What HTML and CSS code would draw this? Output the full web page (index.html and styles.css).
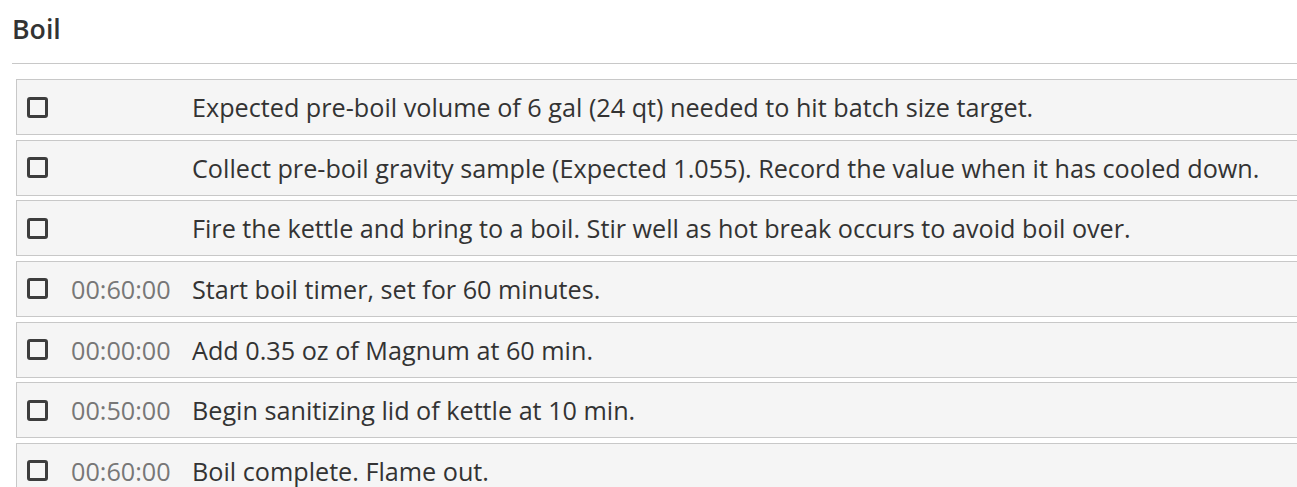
FILE: index.html
```html
<!DOCTYPE html>
<html>
<head>
<meta charset="utf-8">
<link rel="stylesheet" href="styles.css">
</head>
<body>
<div class="page">
  <h2 class="title">Boil</h2>
  <div class="steps">
    <div class="step"><span class="check"></span><span class="time"></span><span class="text">Expected pre-boil volume of 6 gal (24 qt) needed to hit batch size target.</span></div>
    <div class="step"><span class="check"></span><span class="time"></span><span class="text">Collect pre-boil gravity sample (Expected 1.055). Record the value when it has cooled down.</span></div>
    <div class="step"><span class="check"></span><span class="time"></span><span class="text">Fire the kettle and bring to a boil. Stir well as hot break occurs to avoid boil over.</span></div>
    <div class="step"><span class="check"></span><span class="time">00:60:00</span><span class="text">Start boil timer, set for 60 minutes.</span></div>
    <div class="step"><span class="check"></span><span class="time">00:00:00</span><span class="text">Add 0.35 oz of Magnum at 60 min.</span></div>
    <div class="step"><span class="check"></span><span class="time">00:50:00</span><span class="text">Begin sanitizing lid of kettle at 10 min.</span></div>
    <div class="step"><span class="check"></span><span class="time">00:60:00</span><span class="text">Boil complete. Flame out.</span></div>
  </div>
</div>
</body>
</html>
```
FILE: styles.css
```css
html, body {
  margin: 0;
  padding: 0;
  background: #fff;
  overflow: hidden;
}
body {
  font-family: "Open Sans", "Liberation Sans", sans-serif;
  color: #333;
}
.page {
  width: 1400px;
  padding-left: 12px;
}
.title {
  margin: 0;
  padding-top: 10px;
  padding-bottom: 16px;
  height: 37px;
  font-size: 26.7px;
  font-weight: 600;
  line-height: 37px;
  color: #333;
  border-bottom: 1px solid #c8c8c8;
  margin-bottom: 15px;
}
.steps {
  padding-left: 4px;
  display: flex;
  flex-direction: column;
  gap: 4.67px;
}
.step {
  height: 54px;
  border: 1px solid #c8c8c8;
  background: #f5f5f5;
  display: flex;
  align-items: center;
  font-size: 25.2px;
}
.check {
  width: 15px;
  height: 15px;
  border: 3px solid #3d3d3d;
  border-radius: 3px;
  margin-left: 10px;
  flex: none;
}
.time {
  width: 99px;
  margin-left: 23px;
  margin-right: 22px;
  color: #777;
  flex: none;
  white-space: nowrap;
}
.text {
  white-space: nowrap;
}
```
